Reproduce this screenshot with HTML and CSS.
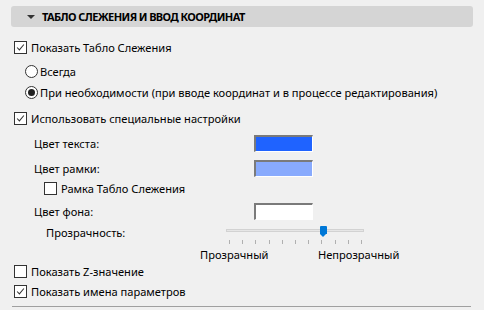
FILE: index.html
```html
<!DOCTYPE html>
<html lang="ru">
<head>
    <meta charset="UTF-8">
    <title>Табло слежения</title>
    <link rel="stylesheet" href="styles.css">
</head>
<body>
    <div class="panel">
        <!-- заголовок -->
        <div class="panel-head">
            <span class="arrow"></span>
            <span class="head-title">ТАБЛО СЛЕЖЕНИЯ И ВВОД КООРДИНАТ</span>
        </div>

        <div class="row r1">
            <span class="box checked"><svg viewBox="0 0 13 13"><polyline points="2.5,6.5 5.2,9.3 10.5,3"/></svg></span>
            <span>Показать Табло Слежения</span>
        </div>
        <div class="row r2 ind1">
            <span class="radio"></span>
            <span>Всегда</span>
        </div>
        <div class="row r3 ind1">
            <span class="radio on"></span>
            <span>При необходимости (при вводе координат и в процессе редактирования)</span>
        </div>
        <div class="row r4">
            <span class="box checked"><svg viewBox="0 0 13 13"><polyline points="2.5,6.5 5.2,9.3 10.5,3"/></svg></span>
            <span>Использовать специальные настройки</span>
        </div>

        <div class="row r5 color-row">
            <span class="label">Цвет текста:</span>
            <span class="swatch blue"></span>
        </div>
        <div class="row r6 color-row">
            <span class="label">Цвет рамки:</span>
            <span class="swatch light"></span>
        </div>
        <div class="row r7 ind2">
            <span class="box"></span>
            <span>Рамка Табло Слежения</span>
        </div>
        <div class="row r8 color-row">
            <span class="label">Цвет фона:</span>
            <span class="swatch white"></span>
        </div>

        <!-- прозрачность -->
        <div class="row r9 slider-row">
            <span class="label-opacity">Прозрачность:</span>
            <div class="slider">
                <div class="track"></div>
                <div class="thumb"></div>
                <div class="ticks">
                    <i></i><i></i><i></i><i></i><i></i><i></i><i></i><i></i><i></i><i></i><i></i>
                </div>
            </div>
        </div>
        <div class="row r10 slider-labels">
            <span class="lbl-left">Прозрачный</span>
            <span class="lbl-right">Непрозрачный</span>
        </div>

        <div class="row r11">
            <span class="box"></span>
            <span>Показать Z-значение</span>
        </div>
        <div class="row r12">
            <span class="box checked"><svg viewBox="0 0 13 13"><polyline points="2.5,6.5 5.2,9.3 10.5,3"/></svg></span>
            <span>Показать имена параметров</span>
        </div>
        <div class="bottom-line"></div>
    </div>
</body>
</html>
```

FILE: styles.css
```css
body {
    margin: 0;
    background-color: #f0f0f0;
    font-family: "Noto Sans", "Open Sans", sans-serif;
    font-size: 11.1px;
    color: #000;
}
.panel {
    width: 484px;
    height: 310px;
    padding-top: 6px;
    box-sizing: border-box;
}
.panel-head {
    margin: 0 11px;
    height: 21px;
    background-color: #d5d5d5;
    border-radius: 3px;
    display: flex;
    align-items: center;
}
.arrow {
    width: 0;
    height: 0;
    margin-left: 16px;
    margin-right: 7px;
    border-left: 4px solid transparent;
    border-right: 4px solid transparent;
    border-top: 4px solid #333;
}
.head-title {
    font-weight: bold;
    font-size: 11px;
    letter-spacing: -0.6px;
}
.row {
    height: 20px;
    display: flex;
    align-items: center;
    padding-left: 14px;
    white-space: nowrap;
}
.r1 { margin-top: 10px; }
.r2 { margin-top: 4px; }
.r3 { margin-top: 1px; }
.r4 { margin-top: 6px; }
.r5 { margin-top: 5px; }
.r6 { margin-top: 5px; }
.r7 { margin-top: 0; }
.r8 { margin-top: 3px; }
.r9 { margin-top: 1px; }
.r10 { margin-top: 2px; }
.r11 { margin-top: -3px; }
.r12 { margin-top: 0; }
.ind1 { padding-left: 25px; }
.ind2 { padding-left: 44px; }

.box {
    width: 13px;
    height: 13px;
    box-sizing: border-box;
    border: 1px solid #333;
    background-color: #fff;
    margin-right: 4px;
    flex-shrink: 0;
}
.box svg {
    display: block;
    width: 11px;
    height: 11px;
}
.box polyline {
    fill: none;
    stroke: #333;
    stroke-width: 1.2;
}
.radio {
    width: 13px;
    height: 13px;
    box-sizing: border-box;
    border: 1px solid #333;
    border-radius: 50%;
    background-color: #fff;
    margin-right: 2px;
    flex-shrink: 0;
    display: flex;
    align-items: center;
    justify-content: center;
}
.radio.on::after {
    content: "";
    width: 7px;
    height: 7px;
    border-radius: 50%;
    background-color: #222;
}

.color-row {
    padding-left: 34px;
}
.color-row .label {
    width: 220px;
}
.swatch {
    width: 59px;
    height: 17px;
    box-sizing: border-box;
    border-top: 2px solid #7a7a7a;
    border-left: 2px solid #7a7a7a;
    border-right: 1px solid #fff;
    border-bottom: 1px solid #fff;
}
.swatch.blue { background-color: #1f63ff; }
.swatch.light { background-color: #88aafd; }
.swatch.white { background-color: #fff; }

.slider-row {
    padding-left: 46px;
}
.label-opacity {
    width: 180px;
}
.slider {
    position: relative;
    width: 138px;
    height: 20px;
}
.track {
    position: absolute;
    left: 0;
    top: 7px;
    width: 138px;
    height: 3px;
    background-color: #e6e6e6;
    border: 1px solid #d2d2d2;
    box-sizing: border-box;
}
.thumb {
    position: absolute;
    left: 94px;
    top: 4px;
    width: 7px;
    height: 8px;
    background-color: #0078d7;
    border-radius: 1px 1px 0 0;
}
.thumb::after {
    content: "";
    position: absolute;
    left: 0;
    top: 8px;
    border-left: 3.5px solid transparent;
    border-right: 3.5px solid transparent;
    border-top: 3px solid #0078d7;
}
.ticks {
    position: absolute;
    left: 3px;
    top: 18px;
    width: 133px;
    display: flex;
    justify-content: space-between;
}
.ticks i {
    width: 1px;
    height: 4px;
    background-color: #b0b0b0;
}
.slider-labels {
    padding-left: 200px;
}
.lbl-left {
    width: 118px;
}
.bottom-line {
    margin: 5px 13px 0 12px;
    height: 1px;
    background-color: #a0a0a0;
}
```
